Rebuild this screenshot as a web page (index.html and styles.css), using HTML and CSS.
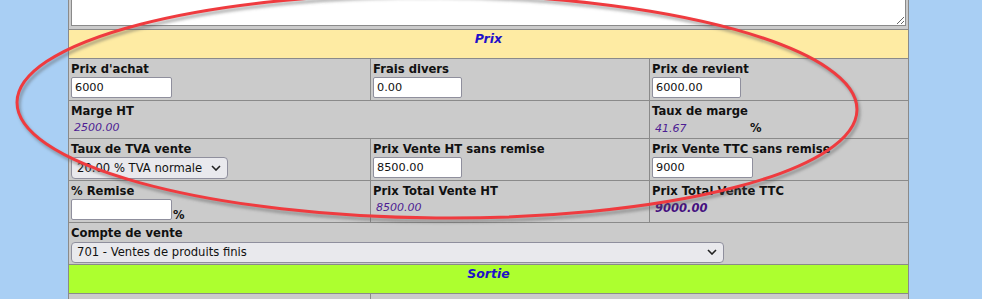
FILE: index.html
```html
<!DOCTYPE html>
<html lang="fr">
<head>
<meta charset="utf-8">
<title>Prix</title>
<link rel="stylesheet" href="styles.css">
</head>
<body>
<div class="page">
  <table class="form">
    <colgroup><col class="c1"><col class="c2"><col class="c3"></colgroup>
    <tr class="r-text">
      <td colspan="3"><textarea class="notes"></textarea></td>
    </tr>
    <tr class="r-head prix">
      <td colspan="3">Prix</td>
    </tr>
    <tr class="r-field">
      <td><div class="lbl">Prix d'achat</div><input class="in w100" value="6000"></td>
      <td><div class="lbl">Frais divers</div><input class="in w89" value="0.00"></td>
      <td><div class="lbl">Prix de revient</div><input class="in w89" value="6000.00"></td>
    </tr>
    <tr class="r-val">
      <td colspan="2"><div class="lbl">Marge HT</div><div class="val">2500.00</div></td>
      <td><div class="lbl">Taux de marge</div><div class="val"><span class="num">41.67</span><b class="pct">%</b></div></td>
    </tr>
    <tr class="r-field">
      <td><div class="lbl">Taux de TVA vente</div>
        <span class="sel-wrap sel-tva"><select class="sel"><option>20.00 % TVA normale</option></select><svg class="chev" width="10" height="6" viewBox="0 0 10 6"><path d="M1 1 L5 5 L9 1" fill="none" stroke="#222" stroke-width="1.6"/></svg></span></td>
      <td><div class="lbl">Prix Vente HT sans remise</div><input class="in w89" value="8500.00"></td>
      <td><div class="lbl">Prix Vente TTC sans remise</div><input class="in w100" value="9000"></td>
    </tr>
    <tr class="r-field">
      <td><div class="lbl">% Remise</div><input class="in w100" value=""><b class="pct-after">%</b></td>
      <td><div class="lbl">Prix Total Vente HT</div><div class="val">8500.00</div></td>
      <td><div class="lbl">Prix Total Vente TTC</div><div class="val strong">9000.00</div></td>
    </tr>
    <tr class="r-field">
      <td colspan="3"><div class="lbl">Compte de vente</div>
        <span class="sel-wrap sel-compte"><select class="sel"><option>701 - Ventes de produits finis</option></select><svg class="chev" width="10" height="6" viewBox="0 0 10 6"><path d="M1 1 L5 5 L9 1" fill="none" stroke="#222" stroke-width="1.6"/></svg></span></td>
    </tr>
    <tr class="r-head sortie">
      <td colspan="3">Sortie</td>
    </tr>
    <tr class="r-rest">
      <td></td><td colspan="2"></td>
    </tr>
  </table>
  <svg class="annot" width="982" height="299" viewBox="0 0 982 299">
    <defs>
      <filter id="sh" x="-10%" y="-10%" width="120%" height="130%">
        <feGaussianBlur stdDeviation="1.6"/>
      </filter>
    </defs>
    <g transform="translate(2 3)">
      <ellipse cx="437" cy="136" rx="420" ry="112" transform="rotate(0.5 437 136)" fill="none" stroke="#555" stroke-opacity="0.5" stroke-width="3" filter="url(#sh)"/>
    </g>
    <ellipse cx="437" cy="136" rx="420" ry="112" transform="rotate(0.5 437 136)" fill="none" stroke="#ef3b3f" stroke-width="3"/>
  </svg>
</div>
</body>
</html>
```

FILE: styles.css
```css
html, body {
  margin: 0;
  padding: 0;
  background: #a9cff4;
  height: 299px;
  overflow: hidden;
}
.page {
  position: relative;
  padding-left: 68px;
  font-family: "DejaVu Sans", Verdana, sans-serif;
  color: #111;
}
.form {
  border-collapse: collapse;
  width: 840px;
  margin-top: -30px;
  background: #cbcbcb;
  table-layout: fixed;
}
.c1 { width: 302px; }
.c2 { width: 279px; }
.c3 { width: 259px; }
.form td {
  border: 1px solid #8a8a8a;
  padding: 3px 2px 0 2px;
  vertical-align: top;
}
.r-text td { padding: 0 2px 3px 2px; background: #cbcbcb; }
.notes {
  display: block;
  box-sizing: border-box;
  width: 835px;
  height: 55px;
  margin: 0;
  border: 1px solid #8a8a8a;
  background: #fff;
  resize: both;
}
.r-head td {
  height: 29px;
  box-sizing: border-box;
  padding: 1px 0 0 0;
  text-align: center;
  font-weight: bold;
  font-style: italic;
  font-size: 12.5px;
  line-height: 16px;
  color: #1f10c8;
}
.prix td { background: #feeba3; }
.sortie td { background: #adff2f; }
.r-field td { height: 42px; box-sizing: border-box; }
.r-val td { height: 38px; box-sizing: border-box; }
.r-rest td { height: 20px; }
.lbl {
  font-weight: bold;
  font-size: 11.6px;
  line-height: 15px;
  height: 15px;
  white-space: nowrap;
}
.val {
  font-style: italic;
  font-size: 11px;
  line-height: 16px;
  color: #4d1d93;
  padding-left: 3px;
  padding-top: 1px;
}
.val.strong { font-weight: bold; color: #45107f; font-size: 11.5px; }
.num { display: inline-block; width: 95px; }
.pct {
  font-style: normal;
  color: #111;
  font-size: 11.5px;
}
.pct-after {
  font-size: 11.5px;
  vertical-align: -5px;
  margin-left: 1px;
}
.in {
  box-sizing: border-box;
  height: 21px;
  margin: 0;
  padding: 0 3px;
  border: 1px solid #8f8f9d;
  border-radius: 2px;
  background: #fff;
  font-family: "DejaVu Sans", Verdana, sans-serif;
  font-size: 11.3px;
  color: #111;
  vertical-align: top;
}
.w100 { width: 101px; }
.w89 { width: 89px; }
.sel-wrap {
  position: relative;
  display: inline-block;
  vertical-align: top;
}
.sel {
  -webkit-appearance: none;
  appearance: none;
  box-sizing: border-box;
  height: 22px;
  margin: 0;
  padding: 0 20px 0 5px;
  border: 1px solid #8f8f9d;
  border-radius: 4px;
  background: #e9e9ed;
  font-family: "DejaVu Sans", Verdana, sans-serif;
  font-size: 11.6px;
  color: #111;
}
.sel-tva .sel { width: 157px; }
.sel-compte .sel { width: 653px; height: 21px; }
.chev {
  position: absolute;
  right: 7px;
  top: 8px;
  pointer-events: none;
}
.annot {
  position: absolute;
  left: 0;
  top: 0;
  pointer-events: none;
}
```
